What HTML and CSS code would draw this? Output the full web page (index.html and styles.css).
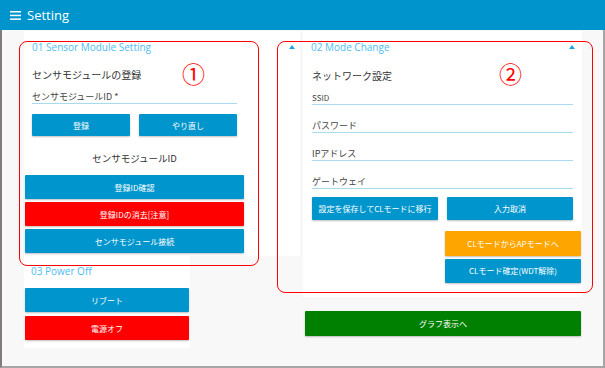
FILE: index.html
```html
<!DOCTYPE html>
<html lang="ja">
<head>
    <meta charset="UTF-8"/>
    <title>Setting</title>
    <link rel="stylesheet" href="styles.css">
</head>
<body>
<div class="app">
    <header class="topbar">
        <svg class="menu-icon" width="11" height="9" viewBox="0 0 11 9">
            <rect x="0" y="0" width="11" height="1.5" fill="#fff"/>
            <rect x="0" y="3.7" width="11" height="1.5" fill="#fff"/>
            <rect x="0" y="7.4" width="11" height="1.5" fill="#fff"/>
        </svg>
        <span class="topbar-title">Setting</span>
    </header>

    <main class="content">
        <!-- left column -->
        <div class="col-left">
            <section class="panel">
                <div class="panel-head">
                    <span class="panel-title">01 Sensor Module Setting</span>
                    <span class="arrow"></span>
                </div>
                <div class="panel-body">
                    <div class="register">
                        <div class="sub-title">センサモジュールの登録</div>
                        <div class="field"><span class="field-label">センサモジュールID *</span></div>
                        <div class="btn-row">
                            <button class="btn btn-blue btn-short">登録</button>
                            <button class="btn btn-blue btn-short">やり直し</button>
                        </div>
                    </div>
                    <div class="id-title">センサモジュールID</div>
                    <div class="btn-stack">
                        <button class="btn btn-blue">登録ID確認</button>
                        <button class="btn btn-red">登録IDの消去[注意]</button>
                        <button class="btn btn-blue">センサモジュール接続</button>
                    </div>
                </div>
            </section>

            <section class="panel-power">
                <div class="panel-title power-title">03 Power Off</div>
                <div class="btn-stack">
                    <button class="btn btn-blue">リブート</button>
                    <button class="btn btn-red">電源オフ</button>
                </div>
            </section>
        </div>

        <!-- right column -->
        <div class="col-right">
            <section class="panel panel-mode">
                <div class="panel-head">
                    <span class="panel-title">02 Mode Change</span>
                    <span class="arrow"></span>
                </div>
                <div class="mode-body">
                    <div class="sub-title">ネットワーク設定</div>
                    <div class="field first"><span class="field-label small">SSID</span></div>
                    <div class="field"><span class="field-label">パスワード</span></div>
                    <div class="field"><span class="field-label">IPアドレス</span></div>
                    <div class="field"><span class="field-label">ゲートウェイ</span></div>
                    <div class="btn-row mode-row">
                        <button class="btn btn-blue btn-short">設定を保存してCLモードに移行</button>
                        <button class="btn btn-blue btn-short">入力取消</button>
                    </div>
                    <div class="side-stack">
                        <button class="btn btn-orange">CLモードからAPモードへ</button>
                        <button class="btn btn-blue">CLモード確定(WDT解除)</button>
                    </div>
                </div>
            </section>
            <button class="btn btn-green">グラフ表示へ</button>
        </div>
    </main>

    <!-- red annotation marks -->
    <div class="mark mark-1"></div>
    <div class="mark mark-2"></div>
    <span class="mark-num num-1">①</span>
    <span class="mark-num num-2">②</span>
</div>
</body>
</html>
```

FILE: styles.css
```css
/* Base */
body {
    margin: 0;
    padding: 0;
    font-family: "Open Sans", "Noto Sans CJK JP", sans-serif;
    color: #333;
}

.app {
    position: relative;
    width: 605px;
    height: 368px;
    overflow: hidden;
    background-color: #f8f8f8;
}

/* Top bar */
.topbar {
    height: 30px;
    background-color: #0094cc;
    display: flex;
    align-items: center;
    padding-left: 10px;
    gap: 6px;
    box-sizing: border-box;
}

.topbar-title {
    color: #fff;
    font-size: 13px;
    font-family: "Open Sans", sans-serif;
}

/* Main area */
.content {
    display: flex;
    align-items: flex-start;
    height: 338px;
    box-sizing: border-box;
    padding: 1px 0 0 22px;
    border-left: 2px solid #857a7a;
    border-right: 2px solid #a5a5a5;
    border-bottom: 2px solid #a5a5a5;
}

.col-left {
    width: 276px;
}

.col-right {
    width: 279px;
    margin-left: 3px;
}

/* Panels */
.panel {
    background-color: #fff;
    padding-bottom: 3px;
}

.panel-head {
    height: 32px;
    display: flex;
    align-items: center;
    justify-content: space-between;
    padding: 0 5px 0 8px;
}

.panel-title {
    color: #4dbdf2;
    font-size: 10px;
}

.arrow {
    width: 0;
    height: 0;
    border-left: 3.5px solid transparent;
    border-right: 3.5px solid transparent;
    border-bottom: 4px solid #1ea6e6;
}

.panel-body {
    width: 221px;
}

.register {
    padding: 0 8px;
}

.sub-title {
    font-size: 10px;
    line-height: 16px;
    margin-top: 4px;
    font-family: "Noto Sans CJK JP", sans-serif;
}

.field {
    height: 15px;
    display: flex;
    align-items: flex-end;
    border-bottom: 1px solid #a9daf0;
    margin-top: 5px;
}

.field-label {
    font-size: 9px;
    line-height: 12px;
    font-family: "Noto Sans CJK JP", sans-serif;
    color: #444;
}

.field-label.small {
    font-size: 8px;
}

.btn-row {
    display: grid;
    grid-template-columns: 1fr 1fr;
    gap: 9px;
    margin-top: 10px;
}

.id-title {
    text-align: center;
    font-size: 9.5px;
    line-height: 16px;
    margin-top: 14px;
    font-family: "Noto Sans CJK JP", sans-serif;
}

.btn-stack {
    display: flex;
    flex-direction: column;
    gap: 3px;
    margin-top: 9px;
    padding: 0 1px;
}

/* Buttons */
.btn {
    display: block;
    width: 100%;
    height: 24px;
    border: none;
    border-radius: 1px;
    color: #fff;
    font-size: 8px;
    font-family: "Noto Sans CJK JP", sans-serif;
    padding: 0;
    box-shadow: 0 1px 2px rgba(0, 0, 0, 0.25);
}

.btn-short {
    height: 22px;
}

.btn-blue {
    background-color: #0096cd;
}

.btn-red {
    background-color: #ff0000;
}

.btn-orange {
    background-color: #ffa500;
}

.btn-green {
    background-color: #008000;
    height: 25px;
    width: 276px;
    margin: 14px 0 0 2px;
}

/* Power off block */
.panel-power {
    width: 166px;
    background-color: #fff;
    padding-bottom: 8px;
}

.power-title {
    padding: 8px 0 0 7px;
    line-height: 14px;
}

.panel-power .btn-stack {
    gap: 4px;
    margin-top: 10px;
}

/* Mode change panel */
.panel-mode {
    padding-bottom: 14px;
}

.panel-mode .panel-head {
    padding-right: 7px;
}

.mode-body {
    padding: 0 9px;
    display: flex;
    flex-direction: column;
}

.mode-body .sub-title {
    margin-top: 5px;
}

.mode-body .field {
    height: 20px;
    margin-top: 7px;
}

.mode-body .field.first {
    margin-top: 0;
}

.mode-row {
    margin-top: 8px;
}

.mode-row .btn {
    height: 23px;
}

.side-stack {
    align-self: flex-end;
    width: 136px;
    margin: 11px -8px 0 0;
    display: flex;
    flex-direction: column;
    gap: 3px;
}

.side-stack .btn {
    height: 24.5px;
}

/* Red annotation marks */
.mark {
    position: absolute;
    border: 1px solid #f00;
    border-radius: 8px;
    pointer-events: none;
}

.mark-1 {
    left: 19px;
    top: 41px;
    width: 238px;
    height: 223px;
}

.mark-2 {
    left: 277px;
    top: 41px;
    width: 314px;
    height: 250px;
}

.mark-num {
    position: absolute;
    color: #f00;
    font-size: 23px;
    line-height: 24px;
    font-family: "Noto Sans CJK JP", sans-serif;
}

.num-1 {
    left: 182px;
    top: 61px;
}

.num-2 {
    left: 499px;
    top: 61px;
}
```
